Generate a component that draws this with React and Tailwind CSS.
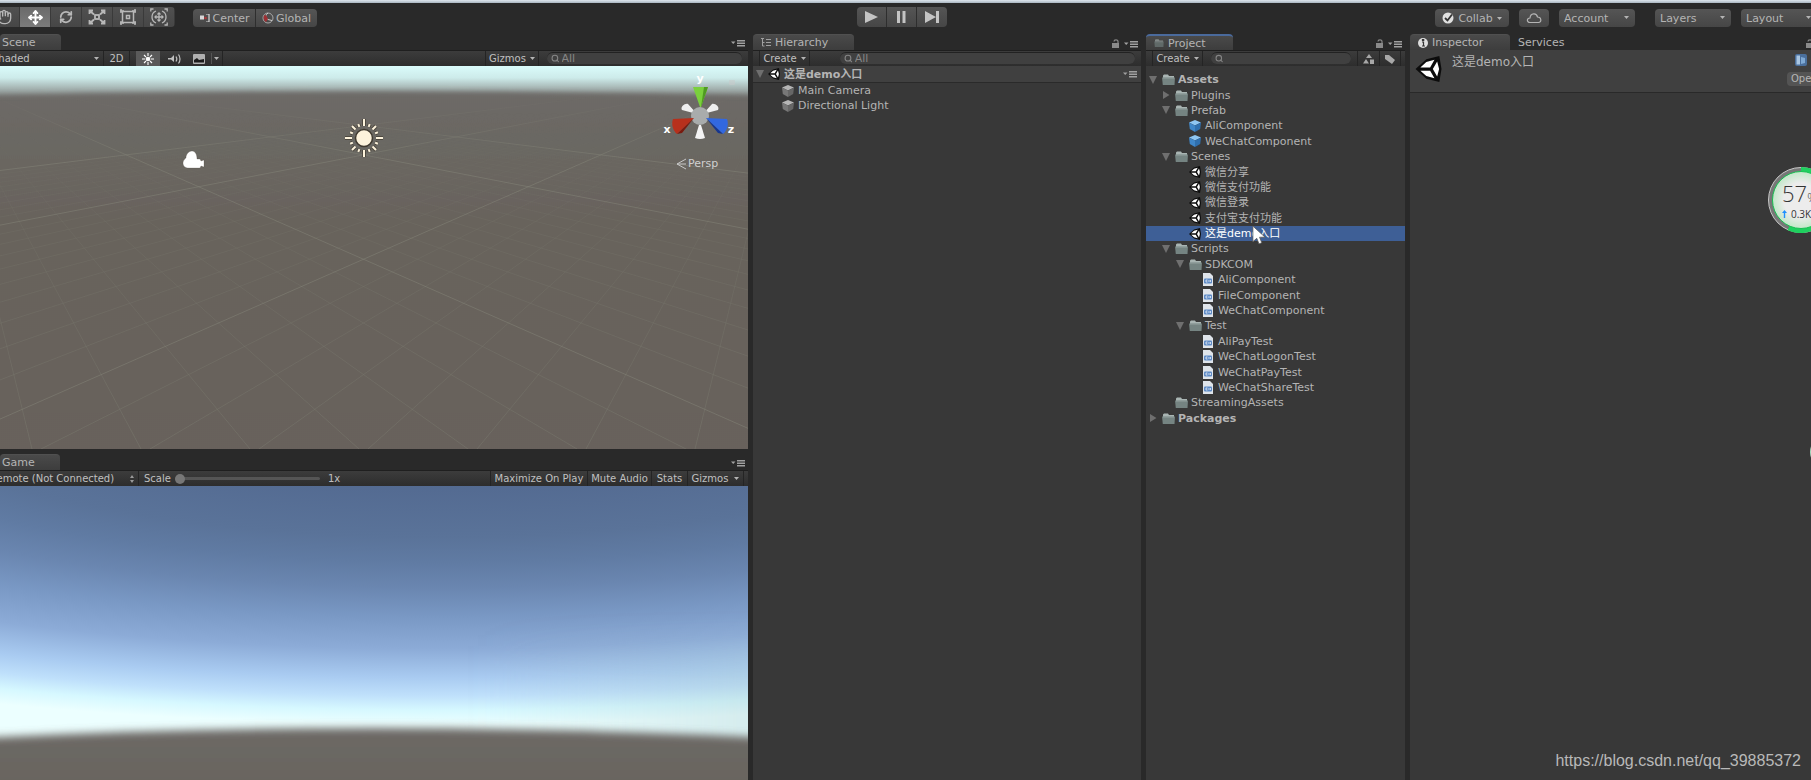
import { useState } from "react";
import { Hand, Move, RefreshCw, Search } from "lucide-react";

const PANEL_TOOLBAR =
  "flex h-4 shrink-0 items-stretch overflow-hidden border-t border-[#1f1f1f] bg-linear-to-b from-[#3c3c3c] to-[#2d2d2d] text-[10px] text-[#c0c0c0]";
const TOP_BUTTON =
  "flex items-center justify-center border-[#2e2e2e] bg-linear-to-b from-[#555] to-[#464646]";

const PROJECT_TREE = [
  { name: "Assets", depth: 0, kind: "folder", open: true, bold: true },
  { name: "Plugins", depth: 1, kind: "folder", open: false },
  { name: "Prefab", depth: 1, kind: "folder", open: true },
  { name: "AliComponent", depth: 2, kind: "prefab" },
  { name: "WeChatComponent", depth: 2, kind: "prefab" },
  { name: "Scenes", depth: 1, kind: "folder", open: true },
  { name: "微信分享", depth: 2, kind: "scene" },
  { name: "微信支付功能", depth: 2, kind: "scene" },
  { name: "微信登录", depth: 2, kind: "scene" },
  { name: "支付宝支付功能", depth: 2, kind: "scene" },
  { name: "这是demo入口", depth: 2, kind: "scene" },
  { name: "Scripts", depth: 1, kind: "folder", open: true },
  { name: "SDKCOM", depth: 2, kind: "folder", open: true },
  { name: "AliComponent", depth: 3, kind: "script" },
  { name: "FileComponent", depth: 3, kind: "script" },
  { name: "WeChatComponent", depth: 3, kind: "script" },
  { name: "Test", depth: 2, kind: "folder", open: true },
  { name: "AliPayTest", depth: 3, kind: "script" },
  { name: "WeChatLogonTest", depth: 3, kind: "script" },
  { name: "WeChatPayTest", depth: 3, kind: "script" },
  { name: "WeChatShareTest", depth: 3, kind: "script" },
  { name: "StreamingAssets", depth: 1, kind: "folder" },
  { name: "Packages", depth: 0, kind: "folder", open: false, bold: true }
];

const DEPTH_PADDING = ["pl-px", "pl-3.5", "pl-7", "pl-[41px]"];

export default function App() {
  return (
    <div className="relative flex h-screen flex-col overflow-hidden bg-[#292929] font-['DejaVu_Sans','Noto_Sans_CJK_SC',sans-serif] text-[11px] leading-none text-[#b4b4b4]">
      <div className="h-[3px] shrink-0 bg-linear-to-b from-[#dfe7ee] to-[#a9b5c0]" />
      <MainToolbar />
      <main className="grid min-h-0 flex-1 grid-cols-[748fr_388fr_259fr_401fr] gap-x-[5px]">
        <div className="flex min-w-0 flex-col">
          <ScenePanel />
          <GamePanel />
        </div>
        <HierarchyPanel />
        <ProjectPanel />
        <InspectorPanel />
      </main>
      <UsageBadge />
      <a
        className="absolute right-2.5 bottom-[11px] font-['Liberation_Sans',sans-serif] text-[16px] leading-4 text-[#b9b9b9]"
        href="https://blog.csdn.net/qq_39885372"
      >
        https://blog.csdn.net/qq_39885372
      </a>
    </div>
  );
}

function MainToolbar() {
  const [tool, setTool] = useState("Move");
  const tools = [
    ["Hand", <Hand size={16} />],
    ["Move", <Move size={15} strokeWidth={3} />],
    ["Rotate", <RefreshCw size={14} strokeWidth={3} />],
    ["Scale", <ScaleIcon />],
    ["Rect", <RectIcon />],
    ["Transform", <TransformIcon />]
  ];

  return (
    <header className="grid h-[31px] shrink-0 grid-cols-[1fr_auto_1fr] items-start pt-1 pr-2">
      <div className="flex items-start gap-[18px]">
        <div className="-ml-[11px] flex overflow-hidden rounded">
          {tools.map(([name, icon]) => (
            <button
              aria-label={name}
              className={`flex h-5 w-[31px] items-center justify-center border-r border-[#3a3a3a] bg-linear-to-b ${
                tool === name ? "from-[#6a6a6a] to-[#7c7c7c] text-white" : "from-[#505050] to-[#464646] text-[#b8b8b8]"
              }`}
              key={name}
              onClick={() => setTool(name)}
            >
              {icon}
            </button>
          ))}
        </div>
        <div className="mt-0.5 flex overflow-hidden rounded">
          <button className={`${TOP_BUTTON} h-[18px] w-[63px] gap-0.5 border-r pl-0.5`}>
            <PivotIcon />
            Center
          </button>
          <button className={`${TOP_BUTTON} h-[18px] w-[61px] gap-0.5`}>
            <GlobalIcon />
            Global
          </button>
        </div>
      </div>

      <div className="flex overflow-hidden rounded text-[#c4c4c4]">
        <button aria-label="Play" className={`${TOP_BUTTON} h-5 w-[30px] border-r`}>
          <svg className="h-3.5 w-3.5" fill="currentColor" viewBox="0 0 14 14"><path d="M1 1L14 7L1 13z" /></svg>
        </button>
        <button aria-label="Pause" className={`${TOP_BUTTON} h-5 w-[30px] border-r`}>
          <svg className="h-3.5 w-3.5" fill="currentColor" viewBox="0 0 14 14"><path d="M3 1h3v12H3zM8.500 1h3v12h-3z" /></svg>
        </button>
        <button aria-label="Step" className={`${TOP_BUTTON} h-5 w-[30px]`}>
          <svg className="h-3.5 w-4" fill="currentColor" viewBox="0 0 16 14"><path d="M1 1L12 7L1 13zM12 1h3v12h-3z" /></svg>
        </button>
      </div>

      <div className="-mr-3.5 mt-0.5 flex justify-end">
        <button className={`${TOP_BUTTON} h-[18px] w-[74px] gap-1 rounded`}>
          <svg className="h-3 w-3" viewBox="0 0 12 12">
            <circle cx="6" cy="6" fill="#e0e0e0" r="5.500" />
            <path d="M3 6L5.500 8.500L10 2.500" fill="none" stroke="#333" strokeWidth="1.800" />
          </svg>
          Collab
          <Caret />
        </button>
        <button aria-label="Cloud" className={`${TOP_BUTTON} ml-2.5 h-[18px] w-[30px] rounded`}>
          <svg className="h-3 w-4" fill="none" stroke="#b4b4b4" strokeWidth="1.200" viewBox="0 0 16 12">
            <path d="M4 10.500C.5 10.500.5 6 4 6C4.500 1 10.500.5 11.500 5C15.500 5 16 10.500 12.500 10.500z" />
          </svg>
        </button>
        <TopSelect label="Account" spacing="ml-2.5" />
        <TopSelect label="Layers" spacing="ml-5" />
        <TopSelect label="Layout" spacing="ml-2.5" />
      </div>
    </header>
  );
}

function TopSelect({ label, spacing }) {
  return (
    <div className={`relative h-[18px] w-[76px] shrink-0 rounded bg-linear-to-b from-[#555] to-[#464646] ${spacing}`}>
      <select aria-label={label} className="h-full w-full appearance-none pl-[5px] outline-none">
        <option>{label}</option>
      </select>
      <span className="pointer-events-none absolute top-[7px] right-1.5">
        <Caret />
      </span>
    </div>
  );
}

function Tab({ children, active = true, focused = false, width }) {
  return (
    <button
      className={`flex h-4 items-center gap-1 rounded-t ${width} ${
        active ? "bg-linear-to-b from-[#4a4a4a] to-[#3d3d3d]" : ""
      } ${focused ? "border-t-2 border-[#4a6a9c]" : active ? "border-t border-[#505050]" : "border-t border-transparent"}`}
    >
      {children}
    </button>
  );
}

function TabBar({ children, lock = false }) {
  return (
    <div className="flex h-4 shrink-0 items-start">
      {children}
      <div className="mt-[5px] mr-[3px] ml-auto flex items-center gap-1">
        {lock && <LockIcon />}
        <MenuIcon />
      </div>
    </div>
  );
}

function SearchField({ label, placeholder, className }) {
  return (
    <label className={`flex h-3 items-center gap-0.5 rounded-full border-t border-[#222] bg-[#404040] px-1 text-[#858585] ${className}`}>
      <Search size={9} strokeWidth={3} />
      <input
        aria-label={label}
        className="h-full w-full min-w-0 bg-transparent text-[11px] outline-none placeholder:text-[#858585]"
        placeholder={placeholder}
      />
    </label>
  );
}

function ScenePanel() {
  return (
    <section className="flex min-h-0 flex-[415_1_0%] flex-col">
      <TabBar>
        <Tab width="w-[61px]"><span className="pl-0.5">Scene</span></Tab>
      </TabBar>
      <div className={PANEL_TOOLBAR}>
        <div className="relative -ml-2 w-28 shrink-0 border-r border-[#242424]">
          <select aria-label="Draw mode" className="h-full w-full appearance-none outline-none">
            <option>Shaded</option>
          </select>
          <span className="pointer-events-none absolute top-[6px] right-1"><Caret /></span>
        </div>
        <button className="w-[26px] border-r border-[#242424]">2D</button>
        <button aria-label="Lighting" className="ml-1.5 flex w-6 items-center justify-center bg-[#5a5a5a]">
          <svg className="h-3 w-3" stroke="#fff" strokeWidth="1.100" viewBox="0 0 12 12">
            <circle cx="6" cy="6" fill="#fff" r="1.800" />
            <path d="M6 0v3M6 9v3M0 6h3M9 6h3M2 2l2 2M8 8l2 2M10 2L8 4M4 8l-2 2" />
          </svg>
        </button>
        <button aria-label="Audio" className="flex w-[29px] items-center justify-center">
          <svg className="h-3 w-3.5" fill="none" stroke="#c0c0c0" strokeWidth="1.200" viewBox="0 0 14 12">
            <path d="M0 5h3l3-3v7L3 6.500H0z" fill="#c0c0c0" stroke="none" />
            <path d="M8 3.500c1 1.500 1 3.500 0 5M10.500 1.500c2 2.500 2 6.500 0 9" />
          </svg>
        </button>
        <button aria-label="Effects" className="flex w-[34px] items-center justify-center border-r border-[#242424]">
          <svg className="h-2.5 w-3" viewBox="0 0 12 10">
            <rect fill="#b0b0b0" height="10" rx="1" width="12" />
            <path d="M1 8V6L4 4L6 6L11 5V8.500H1z" fill="#1c1c1c" />
          </svg>
          <span className="ml-1.5 border-l border-[#555] py-1 pl-0.5"><Caret /></span>
        </button>
        <button className="ml-auto flex w-[54px] shrink-0 items-center justify-center gap-1 border-x border-[#242424]">
          Gizmos
          <Caret />
        </button>
        <SearchField className="mt-px mr-1.5 ml-2 w-[195px] shrink-0" label="Search scene" placeholder="All" />
      </div>
      <SceneView />
    </section>
  );
}

// Ground grid: lines fan out of two vanishing points above the top edge.
const GRID_STEPS = Array.from({ length: 61 }, (_, i) => i - 40);
const GRID_BOTTOM = 383;
const GRID_VANISH_Y = 7;

function SceneView() {
  return (
    <svg className="min-h-0 w-full flex-1" preserveAspectRatio="none" viewBox="0 0 748 383">
      <defs>
        <linearGradient id="sceneSky" x1="0" x2="0" y1="0" y2="1">
          <stop offset="0" stopColor="#dafcfb" />
          <stop offset="0.350" stopColor="#cdebea" />
          <stop offset="0.650" stopColor="#a6b5b3" />
          <stop offset="1" stopColor="#757472" />
        </linearGradient>
        <linearGradient id="sceneGround" x1="0" x2="0" y1="0" y2="1">
          <stop offset="0" stopColor="#6d6a67" />
          <stop offset="0.300" stopColor="#68635c" />
          <stop offset="1" stopColor="#68615b" />
        </linearGradient>
        <linearGradient id="gridFade" x1="0" x2="0" y1="0" y2="1">
          <stop offset="0.120" stopColor="#000" />
          <stop offset="0.400" stopColor="#777" />
          <stop offset="1" stopColor="#fff" />
        </linearGradient>
        <linearGradient id="majorFade" x1="0" x2="0" y1="0" y2="1">
          <stop offset="0.070" stopColor="#000" />
          <stop offset="0.250" stopColor="#fff" />
        </linearGradient>
        <mask id="gridMask"><rect fill="url(#gridFade)" height="383" width="748" /></mask>
        <mask id="majorMask"><rect fill="url(#majorFade)" height="383" width="748" /></mask>
        <filter height="1.200" id="sceneHaze" width="1.200" x="-0.1" y="-0.1"><feGaussianBlur stdDeviation="2.500" /></filter>
      </defs>
      <rect fill="url(#sceneSky)" height="34" width="748" />
      <path d="M-60 31Q374 20 808 31V460H-60z" fill="url(#sceneGround)" filter="url(#sceneHaze)" />
      <g mask="url(#gridMask)" stroke="#7d7d70" strokeOpacity="0.450">
        {GRID_STEPS.filter((k) => k % 10 !== 0).map((k) => (
          <GridPair key={k} step={k} />
        ))}
      </g>
      <g mask="url(#majorMask)" stroke="#85857a" strokeOpacity="0.500">
        {GRID_STEPS.filter((k) => k % 10 === 0).map((k) => (
          <GridPair key={k} step={k} />
        ))}
      </g>

      <path
        d="M186 92c0-4 3-7 6-7c3 0 5 3 5 8h3l1 2l3-1v7l-3-1l-1 2h-11c-4 0-6-2-6-5c0-3 3-5 3-5z"
        fill="#fff"
        stroke="#4d463c"
        strokeOpacity="0.400"
        strokeWidth="0.600"
      />
      <g transform="translate(364 72)">
        <g stroke="#403a30" strokeOpacity="0.700" strokeWidth="4">{sunRays()}</g>
        <circle fill="#fdf3dc" r="8.500" stroke="#403a30" strokeWidth="1.500" />
        <g stroke="#fdf3dc" strokeWidth="2">{sunRays()}</g>
      </g>

      <g>
        <path d="M697 48L682 44C680 41 685 37 688 38zM703 48L718 44C720 41 715 37 712 38z" fill="#eee" />
        <circle cx="700" cy="50" fill="#a9acac" r="9" />
        <path d="M693 21h15l-7 20h-1z" fill="#7ad03c" />
        <path d="M704 21h4l-7 20z" fill="#4f9a22" />
        <path d="M694 52L673 53C671 58 673 65 677 68z" fill="#b7301c" />
        <path d="M694 52L677 68l5-1z" fill="#7a1a0e" />
        <path d="M706 52L727 53C729 58 727 65 723 68z" fill="#3268e0" />
        <path d="M706 52L723 68l-5-1z" fill="#16368f" />
        <path d="M699 59h2l4 13q-5 2-10 0z" fill="#f4f4f4" />
        <g fill="#fff" fontSize="11" fontWeight="bold" textAnchor="middle">
          <text x="700" y="16">y</text>
          <text x="667" y="67">x</text>
          <text x="731" y="67">z</text>
        </g>
        <path d="M686 93l-9 5l9 5M686 98h-9" fill="none" stroke="#c8c8c8" />
        <text fill="#d0d0d0" fontSize="11" x="688" y="101">Persp</text>
        <rect fill="#c9c9c9" fillOpacity="0.500" height="5" rx="1" width="6" x="729" y="14" />
      </g>
    </svg>
  );
}

function GridPair({ step }) {
  const x = 795 + step * 109;
  return (
    <>
      <line x1="-60" x2={x} y1={GRID_VANISH_Y} y2={GRID_BOTTOM} />
      <line x1="787" x2={727 - x} y1={GRID_VANISH_Y} y2={GRID_BOTTOM} />
    </>
  );
}

function sunRays() {
  return Array.from({ length: 16 }, (_, i) => (
    <line key={i} transform={`rotate(${i * 22.5})`} x1="0" x2="0" y1="-12" y2={i % 4 === 0 ? -19 : i % 2 === 0 ? -17 : -15} />
  ));
}

function GamePanel() {
  return (
    <section className="mt-[5px] flex min-h-0 flex-[326_1_0%] flex-col">
      <TabBar>
        <Tab width="w-[60px]"><span className="pl-0.5">Game</span></Tab>
      </TabBar>
      <div className={PANEL_TOOLBAR}>
        <div className="relative -ml-2.5 w-[149px] shrink-0 border-r border-[#242424]">
          <select aria-label="Display target" className="h-full w-full appearance-none outline-none">
            <option>Remote (Not Connected)</option>
          </select>
          <svg className="pointer-events-none absolute top-1 right-[3px] h-2 w-1.5" fill="#9a9a9a" viewBox="0 0 6 8">
            <path d="M3 0L5 3H1zM3 8L1 5h4z" />
          </svg>
        </div>
        <label className="flex items-center gap-1 pl-[5px]">
          Scale
          <input
            className="h-[3px] w-[145px] appearance-none rounded-full bg-[#555] [&::-webkit-slider-thumb]:h-2.5 [&::-webkit-slider-thumb]:w-2.5 [&::-webkit-slider-thumb]:appearance-none [&::-webkit-slider-thumb]:rounded-full [&::-webkit-slider-thumb]:bg-[#777]"
            defaultValue="1"
            max="5"
            min="1"
            type="range"
          />
        </label>
        <span className="flex items-center pl-2">1x</span>
        <div className="mr-1 ml-auto flex shrink-0">
          <button className="w-[97px] border-l border-[#242424]">Maximize On Play</button>
          <button className="w-16 border-l border-[#242424]">Mute Audio</button>
          <button className="w-9 border-l border-[#242424]">Stats</button>
          <button className="flex w-[57px] items-center justify-center gap-1.5 border-x border-[#242424]">
            Gizmos
            <Caret />
          </button>
        </div>
      </div>
      <svg className="min-h-0 w-full flex-1" preserveAspectRatio="none" viewBox="0 0 748 294">
        <defs>
          <radialGradient cx="0" cy="0" gradientTransform="translate(440 -100) scale(3.800 1)" gradientUnits="userSpaceOnUse" id="gameSky" r="360">
            <stop offset="0.270" stopColor="#536a91" />
            <stop offset="0.420" stopColor="#5a7399" />
            <stop offset="0.490" stopColor="#607ba3" />
            <stop offset="0.560" stopColor="#6a86b0" />
            <stop offset="0.640" stopColor="#7998c4" />
            <stop offset="0.730" stopColor="#8cabd7" />
            <stop offset="0.810" stopColor="#a9cbf1" />
            <stop offset="0.860" stopColor="#bfe0fb" />
            <stop offset="0.900" stopColor="#d6f8ff" />
            <stop offset="0.940" stopColor="#ecffff" />
          </radialGradient>
          <linearGradient id="gameShade" x1="0" x2="1" y1="0" y2="0">
            <stop offset="0.600" stopColor="#9fc0c4" stopOpacity="0" />
            <stop offset="1" stopColor="#9fc0c4" stopOpacity="0.350" />
          </linearGradient>
          <linearGradient id="gameGround" x1="0" x2="0" y1="0" y2="1">
            <stop offset="0" stopColor="#6d6966" />
            <stop offset="1" stopColor="#67625b" />
          </linearGradient>
          <filter height="2" id="gameShadeBlur" width="1.200" x="-0.1" y="-0.5"><feGaussianBlur stdDeviation="16" /></filter>
          <filter height="1.800" id="gameHaze" width="1.200" x="-0.1" y="-0.4"><feGaussianBlur stdDeviation="4" /></filter>
        </defs>
        <rect fill="url(#gameSky)" height="294" width="748" />
        <rect fill="url(#gameShade)" filter="url(#gameShadeBlur)" height="130" width="800" y="160" />
        <path d="M-80 255Q374 229 828 255V330H-80z" fill="url(#gameGround)" filter="url(#gameHaze)" />
      </svg>
    </section>
  );
}

function HierarchyPanel() {
  return (
    <section className="flex min-w-0 flex-col">
      <TabBar lock>
        <Tab width="w-[101px]">
          <svg className="ml-2 h-2.5 w-2.5" stroke="#a0a0a0" viewBox="0 0 10 10">
            <path d="M0 .5h3M1.500 1v7M1.500 4.500h2M1.500 8h2M5 1.500h5M5 4.500h5M5 7.500h5" />
          </svg>
          Hierarchy
        </Tab>
      </TabBar>
      <div className={PANEL_TOOLBAR}>
        <CreateButton />
        <SearchField className="mt-px mr-1.5 ml-[30px] flex-1" label="Search hierarchy" placeholder="All" />
      </div>
      <div className="flex-1 bg-[#383838]">
        <div className="flex h-[17px] items-center border-b border-[#2a2a2a] bg-[#404040] pr-1 font-bold">
          <span className="ml-px"><Foldout open /></span>
          <UnityIcon className="mr-1 ml-0.5 h-3 w-3" />
          这是demo入口
          <span className="ml-auto"><MenuIcon /></span>
        </div>
        <ul>
          {["Main Camera", "Directional Light"].map((name) => (
            <li className="flex h-[15px] items-center gap-1 pl-[29px]" key={name}>
              <CubeIcon left="#777" right="#666" top="#b5b5b5" />
              {name}
            </li>
          ))}
        </ul>
      </div>
    </section>
  );
}

function CreateButton() {
  return (
    <button className="ml-1.5 flex w-[51px] shrink-0 items-center justify-center gap-1 border-x border-[#242424]">
      Create
      <Caret />
    </button>
  );
}

function ProjectPanel() {
  const [selected, setSelected] = useState(10);

  return (
    <section className="flex min-w-0 flex-col">
      <TabBar lock>
        <Tab focused width="w-[87px]">
          <span className="ml-2 opacity-60"><FolderIcon small /></span>
          Project
        </Tab>
      </TabBar>
      <div className={PANEL_TOOLBAR}>
        <CreateButton />
        <SearchField className="mt-px mr-1.5 ml-2 flex-1" label="Search project" />
        <button aria-label="Filter by type" className="flex w-[22px] items-center justify-center border-l border-[#242424]">
          <svg className="h-2.5 w-3" fill="#a8a8a8" viewBox="0 0 12 10">
            <path d="M6 0L9 4H3zM0 9.500L3 5l3 4.500zM7 5.500h4V10H7z" />
          </svg>
        </button>
        <button aria-label="Filter by label" className="mr-1 flex w-[22px] items-center justify-center border-x border-[#242424]">
          <svg className="h-2.5 w-3" fill="#a8a8a8" viewBox="0 0 12 10">
            <path d="M1 1h4l6 5l-3 4L1 5z" />
          </svg>
        </button>
      </div>
      <div className="flex-1 bg-[#383838] pt-1.5">
        <ul className="flex h-[354px] flex-col">
          {PROJECT_TREE.map((item, index) => (
            <li
              className={`relative flex flex-1 items-center whitespace-nowrap ${DEPTH_PADDING[item.depth]} ${
                item.bold ? "font-bold" : ""
              } ${index === selected ? "bg-[#3e5f96] text-white" : ""}`}
              key={index}
              onClick={() => setSelected(index)}
            >
              {item.open === undefined ? <span className="w-3" /> : <Foldout open={item.open} />}
              <span className="mr-[3px] ml-0.5 flex w-3.5 justify-center">
                <AssetIcon kind={item.kind} />
              </span>
              {item.name}
              {index === 10 && <Pointer />}
            </li>
          ))}
        </ul>
      </div>
    </section>
  );
}

function InspectorPanel() {
  return (
    <section className="-mr-6 flex min-w-0 flex-col">
      <TabBar lock>
        <Tab width="w-[100px]">
          <svg className="ml-2 h-2.5 w-2.5" viewBox="0 0 10 10">
            <circle cx="5" cy="5" fill="#ddd" r="5" />
            <path d="M4 4h1.500v4M4 8h3M4.500 1.500h1.200v1H4.500z" fill="none" stroke="#333" strokeWidth="1.200" />
          </svg>
          Inspector
        </Tab>
        <Tab active={false} width="w-[70px]"><span className="pl-2">Services</span></Tab>
      </TabBar>
      <div className="flex h-[43px] shrink-0 items-start border-b border-[#292929] bg-[#404040]">
        <UnityIcon className="mt-1.5 ml-[5px] h-[26px] w-[27px]" />
        <h2 className="mt-1.5 ml-2.5 text-[12px]">这是demo入口</h2>
        <div className="mt-1 mr-0.5 ml-auto flex w-[46px] flex-col gap-1.5">
          <svg className="ml-2 h-3 w-3" viewBox="0 0 12 12">
            <rect fill="#4a6f9c" height="12" rx="2" width="12" />
            <path d="M1.500 1.500h3.500v9H1.500z" fill="#a9c6e2" />
            <path d="M6 3l4 1v5l-4 1z" fill="#7fa9d4" />
          </svg>
          <button className="h-3.5 rounded bg-[#545454] pl-1 text-left text-[10px]">Open</button>
        </div>
      </div>
      <div className="flex-1 bg-[#383838]" />
    </section>
  );
}

// Floating network meter, partly off the right edge of the desktop.
function UsageBadge() {
  return (
    <>
      <div className="absolute top-[167px] -right-[23px] h-[66px] w-[66px]">
        <svg className="h-full w-full" viewBox="0 0 66 66">
          <defs>
            <radialGradient id="badgeFace">
              <stop offset="0.600" stopColor="#ececec" />
              <stop offset="1" stopColor="#c2e8c8" />
            </radialGradient>
          </defs>
          <circle cx="33" cy="33" fill="#777" r="32.500" stroke="#c8c8c8" />
          <path d="M33 2.500A30.500 30.500 0 1 1 20.500 61" fill="none" stroke="#1fd05f" strokeWidth="5" />
          <circle cx="33" cy="33" fill="url(#badgeFace)" r="28.500" stroke="#17c052" />
        </svg>
        <p className="absolute top-[15px] left-3.5 font-['Open_Sans',sans-serif] text-[22px] leading-[22px] font-light whitespace-nowrap text-[#333]">
          57<span className="text-[12px]">%</span>
        </p>
        <p className="absolute top-[41px] left-3.5 flex items-center gap-1 font-['Open_Sans',sans-serif] text-[10px] leading-3 whitespace-nowrap text-[#333]">
          <svg className="h-2 w-[5px]" viewBox="0 0 5 8">
            <path d="M2.500 0L5 3H3.200V8H1.800V3H0z" fill="#1e90ff" />
          </svg>
          0.3K/s
        </p>
      </div>
      <div className="absolute top-[435px] -right-[33px] h-[34px] w-[34px] rounded-full bg-[#a9dcc0]" />
    </>
  );
}

function AssetIcon({ kind }) {
  if (kind === "folder") return <FolderIcon />;
  if (kind === "prefab") return <CubeIcon left="#3f86c8" right="#2f6fae" top="#8fc6f2" />;
  if (kind === "scene") return <UnityIcon className="h-3 w-3" />;
  return (
    <svg className="h-[13px] w-2.5" viewBox="0 0 10 13">
      <path d="M0 0h7l3 3v10H0z" fill="#dfe4ea" />
      <rect fill="#5d8ac6" height="5" rx="1" width="8" x="1" y="5.500" />
      <path d="M4.500 7H3v2h1.500M6 7v2M7.500 7v2" fill="none" stroke="#e8eef6" strokeWidth="0.800" />
    </svg>
  );
}

function FolderIcon({ small = false }) {
  return (
    <svg className={small ? "h-2 w-2.5" : "h-[11px] w-[13px]"} viewBox="0 0 13 11">
      <path d="M1 1.500L2 .5H6L7 2H12V5H1z" fill="#a9b5b3" />
      <path d="M0 3.500H13L12.500 11H.8z" fill="#758482" />
      <path d="M1 4h11" stroke="#93a09e" />
    </svg>
  );
}

function CubeIcon({ top, left, right }) {
  return (
    <svg className="h-3 w-3" viewBox="0 0 12 12">
      <path d="M6 0L12 2.500L6 5.500L0 2.500z" fill={top} />
      <path d="M0 2.500L6 5.500V12L.8 9z" fill={left} />
      <path d="M12 2.500L6 5.500V12L11.200 9z" fill={right} />
    </svg>
  );
}

function UnityIcon({ className }) {
  return (
    <svg className={className} viewBox="0 0 24 24">
      <path d="M0 12L10 3L22 0L24 12L22 24L10 21z" fill="#0c0c0c" />
      <path d="M4.500 10.500L10 5.500L17.500 3.500L13.500 10.500zM4.500 13.500L10 18.500L17.500 20.500L13.500 13.500zM16 12L20 5L21.800 12L20 19z" fill="#fff" />
    </svg>
  );
}

function Foldout({ open }) {
  return (
    <svg className="h-2.5 w-3" fill="#6f6f6f" viewBox="0 0 12 10">
      <path d={open ? "M2 1h8L6 9z" : "M3 1L9.500 5L3 9z"} />
    </svg>
  );
}

function Caret() {
  return (
    <svg className="h-[3px] w-[5px]" fill="#b4b4b4" viewBox="0 0 5 3">
      <path d="M0 0h5L2.500 3z" />
    </svg>
  );
}

function MenuIcon() {
  return (
    <svg className="h-2 w-3.5" fill="#a0a0a0" viewBox="0 0 14 8">
      <path d="M0 2.500h4.500L2.200 5zM6 1h8v1.500H6zM6 3.500h8V5H6zM6 6h8v1.500H6z" />
    </svg>
  );
}

function LockIcon() {
  return (
    <svg className="h-[9px] w-2" viewBox="0 0 8 9">
      <rect fill="#8a8a8a" height="5" width="7" y="4" />
      <path d="M2 2.500C2 .3 6 .3 6 2.500V4.500" fill="none" stroke="#8a8a8a" strokeWidth="1.200" />
    </svg>
  );
}

function ScaleIcon() {
  return (
    <svg className="h-4 w-[18px]" fill="none" stroke="currentColor" strokeWidth="1.800" viewBox="0 0 18 16">
      <rect height="4" width="4" x="7" y="6" />
      <path d="M1.500 5V1.500H5M13 1.500h3.500V5M16.500 11v3.500H13M5 14.500H1.500V11M2 2l4 3.500M16 2l-4 3.500M2 14l4-3.500M16 14l-4-3.500" />
    </svg>
  );
}

function RectIcon() {
  return (
    <svg className="h-4 w-4" fill="none" stroke="currentColor" strokeWidth="1.500" viewBox="0 0 16 16">
      <rect height="11" width="11" x="2.500" y="2.500" />
      <rect height="3" width="3" x="6.500" y="6.500" />
      <path d="M1 0v4M15 0v4M1 12v4M15 12v4M0 2h4M12 2h4M0 14h4M12 14h4" />
    </svg>
  );
}

function TransformIcon() {
  return (
    <svg className="h-[18px] w-[18px]" fill="none" stroke="currentColor" strokeWidth="1.300" viewBox="0 0 18 18">
      <path d="M6 3A6.500 6.500 0 0 0 6 15M12 3A6.500 6.500 0 0 1 12 15M9 5v8M5 9h8" />
      <path d="M7.500 6.500L9 5l1.500 1.500M7.500 11.500L9 13l1.500-1.500M6.500 7.500L5 9l1.500 1.500M11.500 7.500L13 9l-1.500 1.500" />
      <path d="M.8 3.500V1h2.700M14.500 1h2.700v2.500M17.200 14.500V17h-2.700M3.500 17H.8v-2.500" />
    </svg>
  );
}

function PivotIcon() {
  return (
    <svg className="h-2 w-2.5" viewBox="0 0 10 8">
      <rect fill="#d8d8d8" height="4" width="4" y="1.500" />
      <path d="M6 0h3v8H6" fill="none" stroke="#d8d8d8" strokeWidth="1.200" />
      <circle cx="5.500" cy="4" fill="#b0383a" r="1.300" />
    </svg>
  );
}

function GlobalIcon() {
  return (
    <svg className="h-3 w-3" fill="none" viewBox="0 0 12 12">
      <circle cx="6" cy="6" r="5" stroke="#a8a8a8" />
      <path d="M6 1C3 3 3 6 6 7.500L10 8.500" stroke="#d0d0d0" />
      <path d="M2 3.500C1 6 2 9 4 10L6 7L4 3z" fill="#9e2f33" />
    </svg>
  );
}

function Pointer() {
  return (
    <svg className="pointer-events-none absolute -top-px left-[105px] z-10 h-5 w-4" viewBox="0 0 13 18">
      <path d="M1 1v14l3.500-3l2 5l2.500-1l-2-5H12z" fill="#fff" stroke="#555" strokeWidth="0.700" />
    </svg>
  );
}
